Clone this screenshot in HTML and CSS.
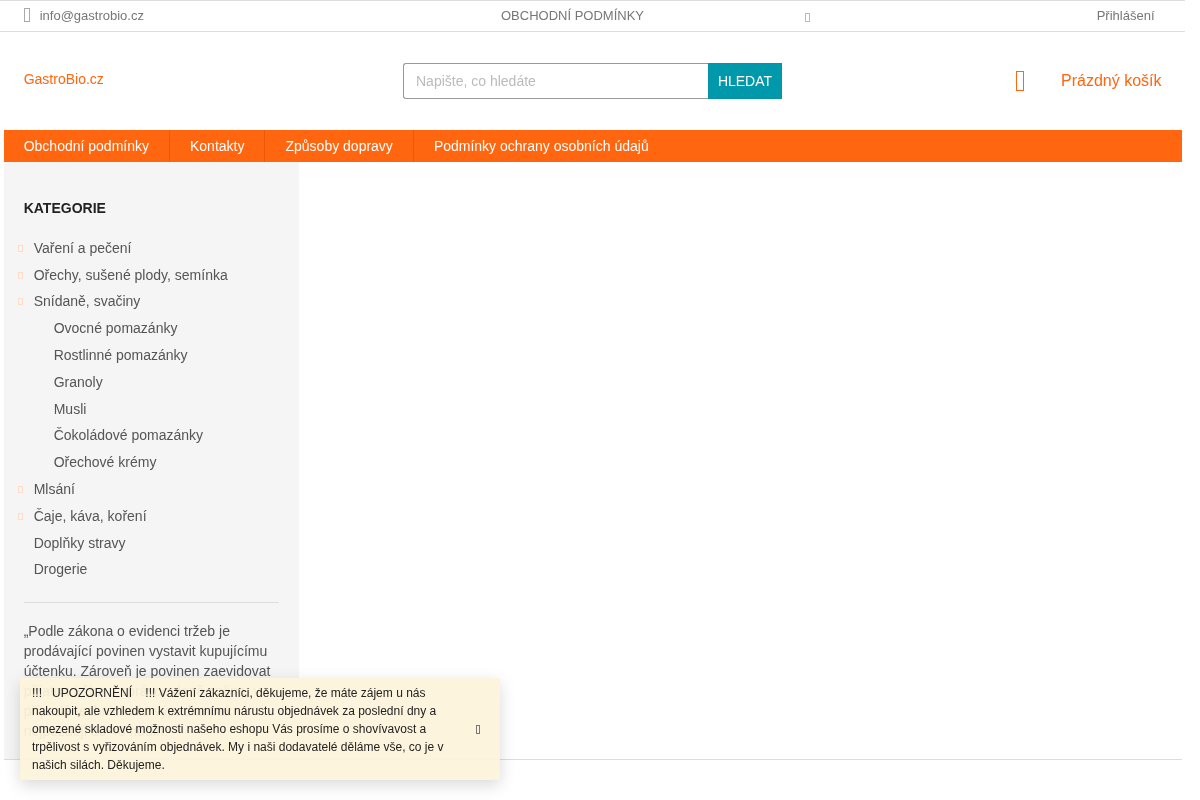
FILE: index.html
```html
<!DOCTYPE html>
<html lang="cs">
<head>
<meta charset="utf-8">
<title>GastroBio.cz</title>
<link rel="stylesheet" href="styles.css">
</head>
<body>
<div class="page">
  <div class="topbar">
    <div class="contact"><span class="box box-mail"></span><a href="#">info@gastrobio.cz</a></div>
    <a class="toplink" href="#">OBCHODNÍ PODMÍNKY</a>
    <span class="box box-small"></span>
    <a class="login" href="#">Přihlášení</a>
  </div>
  <header class="header">
    <a class="logo" href="#">GastroBio.cz</a>
    <form class="search">
      <input class="search-input" type="text" placeholder="Napište, co hledáte">
      <button class="search-btn" type="button">HLEDAT</button>
    </form>
    <a class="cart" href="#"><span class="box box-cart"></span><span>Prázdný košík</span></a>
  </header>
  <nav class="nav">
    <a href="#">Obchodní podmínky</a>
    <a href="#">Kontakty</a>
    <a href="#">Způsoby dopravy</a>
    <a href="#">Podmínky ochrany osobních údajů</a>
  </nav>
  <div class="main">
    <aside class="sidebar">
      <h2 class="side-title">KATEGORIE</h2>
      <ul class="cats">
        <li class="has-sub"><a href="#">Vaření a pečení</a></li>
        <li class="has-sub"><a href="#">Ořechy, sušené plody, semínka</a></li>
        <li class="has-sub"><a href="#">Snídaně, svačiny</a></li>
        <li class="sub"><a href="#">Ovocné pomazánky</a></li>
        <li class="sub"><a href="#">Rostlinné pomazánky</a></li>
        <li class="sub"><a href="#">Granoly</a></li>
        <li class="sub"><a href="#">Musli</a></li>
        <li class="sub"><a href="#">Čokoládové pomazánky</a></li>
        <li class="sub"><a href="#">Ořechové krémy</a></li>
        <li class="has-sub"><a href="#">Mlsání</a></li>
        <li class="has-sub"><a href="#">Čaje, káva, koření</a></li>
        <li><a href="#">Doplňky stravy</a></li>
        <li><a href="#">Drogerie</a></li>
      </ul>
      <p class="side-note">„Podle zákona o evidenci tržeb je prodávající povinen vystavit kupujícímu účtenku. Zároveň je povinen zaevidovat přijatou tržbu u správce daně online; v případě technického výpadku pak nejpozději do 48 hodin.“</p>
    </aside>
  </div>
  <footer class="footer"></footer>
</div>
<div class="notice">
  <p class="notice-text">!!!&nbsp;&nbsp; UPOZORNĚNÍ &nbsp;&nbsp; !!! Vážení zákazníci, děkujeme, že máte zájem u nás nakoupit, ale vzhledem k extrémnímu nárustu objednávek za poslední dny a omezené skladové možnosti našeho eshopu Vás prosíme o shovívavost a trpělivost s vyřizováním objednávek. My i naši dodavatelé děláme vše, co je v našich silách. Děkujeme.</p>
  <span class="box box-close"></span>
</div>
</body>
</html>
```
FILE: styles.css
```css
* { box-sizing: border-box; }
html, body { margin: 0; padding: 0; height: 800px; overflow: hidden; background: #fff; }
body { font-family: "Liberation Sans", Arial, sans-serif; font-size: 14px; color: #555; }
a { color: inherit; text-decoration: none; }
.page { width: 1185px; will-change: opacity; }
.box { display: block; flex: none; border-style: solid; }

.topbar {
  display: grid;
  grid-template-columns: 477.3px 304px 1fr auto;
  align-items: center;
  height: 32px;
  padding: 0 30.5px 0 23.7px;
  border-top: 1px solid #ddd;
  border-bottom: 1px solid #ddd;
  font-size: 13px;
  color: #777;
}
.contact { display: flex; align-items: center; gap: 10px; margin-top: -2px; }
.box-mail { width: 6px; height: 14px; border-width: 1px; border-color: #aaa; }
.box-small { width: 5px; height: 9px; margin-top: 2px; border-width: 1px; border-color: #bbb; }
.toplink { margin-top: -1px; }
.login { margin-top: -1px; }

.header {
  display: flex;
  align-items: center;
  height: 98px;
  padding: 0 23.5px 0 23.7px;
}
.logo { width: 379.3px; margin-top: -4px; color: #ff660f; font-size: 14px; }
.search { display: flex; width: 379px; height: 36px; }
.search-input {
  flex: 1;
  min-width: 0;
  padding: 0 12px;
  border: 1px solid #999;
  border-right: 0;
  border-radius: 3px 0 0 3px;
  font: 14px "Liberation Sans", Arial, sans-serif;
  outline: 0;
}
.search-input::placeholder { color: #bbb; opacity: 1; }
.search-btn {
  width: 74px;
  padding: 0;
  border: 1px solid #0892a5;
  background: #0099ab;
  color: #fff;
  font: 14px "Liberation Sans", Arial, sans-serif;
}
.cart { display: flex; align-items: center; gap: 37px; margin-left: auto; color: #ff660f; font-size: 16px; }
.box-cart { width: 8px; height: 20px; border-width: 1.5px; border-color: #ff660f; }

.nav {
  display: flex;
  height: 32px;
  margin: 0 3px 0 3.7px;
  background: #ff660f;
  color: #fff;
}
.nav a { display: flex; align-items: center; padding: 0 20px; border-right: 1px solid #ec5a08; }
.nav a:last-child { border-right: 0; }

.main { display: flex; height: 597px; margin: 0 3px 0 3.7px; }
.sidebar { width: 295.3px; padding: 38px 20px 0; background: #f5f5f5; overflow: hidden; }
.side-title { margin: 0 0 18.8px; font-size: 14px; line-height: 16px; font-weight: 700; color: #222; }
.cats { margin: 0; padding: 0 0 19px 10px; list-style: none; border-bottom: 1px solid #ddd; }
.cats li { position: relative; line-height: 26.8px; }
.cats .sub { padding-left: 20px; }
.has-sub::before {
  content: "";
  position: absolute;
  left: -15.5px;
  top: 10px;
  width: 3px;
  height: 5px;
  border: 1px solid #ffdcc5;
}
.side-note { margin: 18px 0 0; line-height: 20px; }

.footer { height: 1px; margin: 0 3px 0 3.7px; background: #ddd; }

.notice {
  position: fixed;
  left: 20px;
  top: 678px;
  display: flex;
  align-items: center;
  width: 480px;
  height: 102px;
  padding: 6px 20px 6px 12px;
  background: rgba(253, 243, 220, .94);
  box-shadow: 0 5px 15px rgba(0, 0, 0, .15);
  color: #222;
  font-size: 12px;
  line-height: 18px;
}
.notice-text { flex: 1; margin: 0; padding-right: 20px; }
.box-close { width: 4px; height: 9px; margin-top: 1px; border-width: 1px; border-color: #777; }
```
